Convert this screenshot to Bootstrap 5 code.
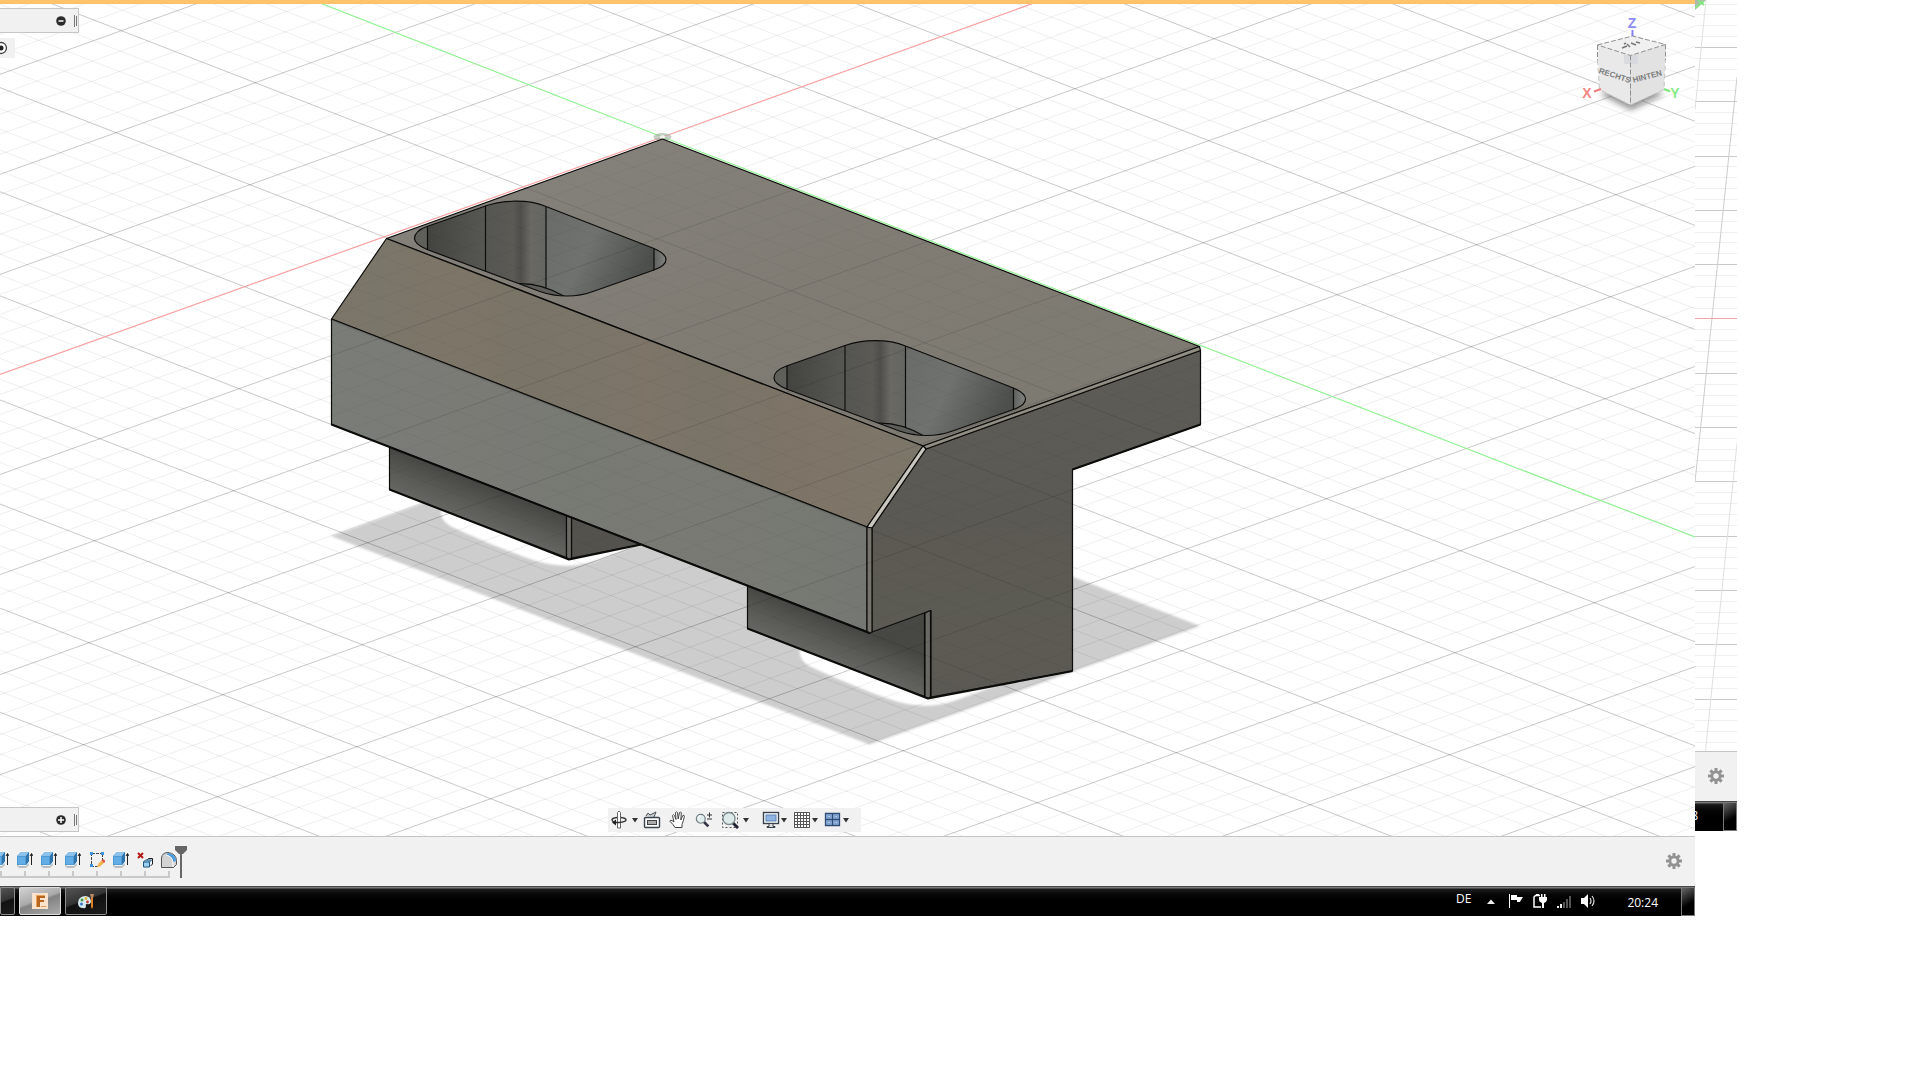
<!DOCTYPE html>
<html lang="de">
<head>
<meta charset="utf-8">
<meta name="viewport" content="width=device-width, initial-scale=1">
<title>CAD-Arbeitsbereich</title>
<link href="https://cdn.jsdelivr.net/npm/bootstrap@5.3.0/dist/css/bootstrap.min.css" rel="stylesheet">
<style>
body{background:#fff;font-family:"Open Sans","Noto Sans",sans-serif;font-size:12px;line-height:16px;overflow-x:hidden}
svg{display:block}
.btn{line-height:1;--bs-btn-border-radius:0}
.screen-main{flex:0 0 88.28125%;min-width:0}
.screen-rest{flex:0 0 2.1875%;min-width:0;overflow:hidden}
.topline{height:4px;background:#ffc46b}
.scene{width:100%;height:auto}
.palette{background:#f1f1f1;border:1px solid #c6c6c6;border-left:0;width:79px;height:25px;left:0}
.palette-top{top:4px}
.palette-bottom{bottom:4px}
.eye-row{left:0;top:34px;width:15px;height:20px;background:#f1f1f1}
.nav-tools{left:35.87%;bottom:4px;height:24px;padding:0 12px 0 2px;background:#f1f1f1}
.g5{gap:5px}.g6{gap:6px}.g8{gap:8px}.g4{gap:4px}.g1{gap:1px}.after-gap{margin-left:8px}
.timeline{height:50px;background:#f1f1f1;border-top:1px solid #c4c4c4}
.steps{margin-left:-11px;height:42px;padding-top:15px}
.steps li{width:24px;height:26px;position:relative}
.steps li::before{content:"";position:absolute;left:0;right:0;bottom:0;height:2px;background:#c9c9c9}
.steps li:last-child::before{right:11px}
.steps li::after{content:"";position:absolute;left:11px;bottom:0;width:2px;height:7px;background:#c9c9c9}
.playhead{margin:9px 0 0 -6px}
.gear{margin:16px 13px 0 0}
.taskbar{height:30px;color:#fff;background:linear-gradient(#1b1b1b 0,#777 1px,#777 2px,#1c1c1c 3px,#060606 9px,#000 15px)}
.task{width:42px;height:28px;border:1px solid #8e8e8e!important;border-radius:2px!important;background:linear-gradient(160deg,#555 0,#333 45%,#111 50%,#1c1c1c 100%)}
.task-cut{width:15px}
.task-on{border-color:#ddd!important;background:linear-gradient(160deg,#d2d2d2 0,#aaa 45%,#828282 52%,#aaa 100%)}
.tray{color:#fff}
.lang{margin-right:16px;margin-bottom:4px}
.tray-ico{gap:10px;margin-left:14px}
.clock{margin-left:32px;margin-right:23px}
.peek{width:14px;height:29px;border:1px solid #777!important;background:linear-gradient(150deg,#666 0,#222 40%,#000 60%)}
.clock-cut{width:3px;direction:rtl}
</style>
</head>
<body>
<svg width="0" height="0" class="position-absolute" aria-hidden="true">
<defs>
<symbol id="extrude" viewBox="0 0 16 16"><path d="M0 12l2 2h7l3-3v2l-3 3H2l-2-2z" fill="#b9bec6"/><path d="M0 4l4-4h8v9l-3 4H0z" fill="#4f9bd6"/><path d="M0 4l4-4h8L9 4z" fill="#8cc2ea"/><path d="M9 4l3-4v9l-3 4z" fill="#2f74ad"/><path d="M1 5h7v7H1z" fill="#63ade6"/><path d="M14.500 13V2M13 4l1.500-2.500L16 4" stroke="#222" fill="none"/></symbol>
<symbol id="sketch" viewBox="0 0 16 16"><path d="M2.500 1v12M14 1.500H2M13.500 2v6M2 14.500h7" stroke="#444" fill="none" stroke-dasharray="3 1"/><path d="M1 0h3v3H1zM12 0h3v3h-3zM1 12h3v3H1z" fill="#3a93dc"/><path d="M8 15l1.500-3.500L13 8l3 2-5 4.500z" fill="#f3b44c"/><path d="M12.500 8.500L14 7l2.500 2L15 11z" fill="#e0574c"/></symbol>
<symbol id="delbody" viewBox="0 0 16 16"><path d="M1 1l5 5M6 1L1 6" stroke="#b61717" stroke-width="2"/><path d="M9.500 9l2-2.500h4V12l-2 2" fill="#eef5fb" stroke="#1d1d1d"/><path d="M6.500 10h6v5h-6zM6.500 10l2-2h6l-2 2" fill="#9bd0f2" stroke="#20577d"/></symbol>
<symbol id="fillet" viewBox="0 0 16 16"><path d="M.5 15.500V6Q1 .5 7 .5q8 1 8.500 8v4l-3 3z" fill="#d3d3d3" stroke="#555"/><path d="M7 1q8 1 8 8l-3 1Q11 4 5 3z" fill="#4d9bdc"/><path d="M5 3q6 1 7 7v5" stroke="#fff" fill="none"/></symbol>
<symbol id="gear" viewBox="0 0 16 16"><g fill="#929292"><path d="M6.500 0h3v16h-3z"/><path d="M6.500 0h3v16h-3z" transform="rotate(45 8 8)"/><path d="M6.500 0h3v16h-3z" transform="rotate(90 8 8)"/><path d="M6.500 0h3v16h-3z" transform="rotate(135 8 8)"/><circle cx="8" cy="8" r="5.500"/></g><circle cx="8" cy="8" r="2.700" fill="#f1f1f1"/></symbol>
<symbol id="caret" viewBox="0 0 6 5"><path d="M0 0h6L3 4.500z" fill="#333"/></symbol>
<symbol id="lens" viewBox="0 0 18 18"><path d="M9 9l6 6" stroke="#334" stroke-width="3"/><circle cx="6.500" cy="6.500" r="5" fill="#dfeeed" stroke="#6f7b80" stroke-width="1.300"/><path d="M3.500 6q.5-3 3-3" stroke="#fff" fill="none" stroke-width="1.500"/></symbol>
<clipPath id="bodyclip"><path d="M386.500 238.500L662.500 139 1200 347V424L1073 469V671L928 698 748 628V587L640 544 569 559 389 489V447L331 424V319Z"/></clipPath>
<linearGradient id="gTop" x1="0" y1="0" x2="1" y2="1"><stop offset="0" stop-color="#86837c"/><stop offset=".5" stop-color="#807c74"/><stop offset="1" stop-color="#7c7970"/></linearGradient>
<linearGradient id="gCham" gradientUnits="userSpaceOnUse" x1="331" y1="0" x2="923" y2="0"><stop offset="0" stop-color="#7b7568"/><stop offset=".08" stop-color="#7a7669"/><stop offset=".2" stop-color="#7d7568"/><stop offset=".34" stop-color="#797467"/><stop offset=".44" stop-color="#7a7568"/><stop offset=".53" stop-color="#7e7468"/><stop offset=".63" stop-color="#797467"/><stop offset=".8" stop-color="#7e7367"/><stop offset=".86" stop-color="#7e7568"/><stop offset="1" stop-color="#7b7669"/></linearGradient>
<linearGradient id="gFront" gradientUnits="userSpaceOnUse" x1="331" y1="0" x2="870" y2="0"><stop offset="0" stop-color="#797c77"/><stop offset=".25" stop-color="#7b7b76"/><stop offset=".45" stop-color="#777973"/><stop offset=".65" stop-color="#797a73"/><stop offset="1" stop-color="#757872"/></linearGradient>
<linearGradient id="gSide" x1="0" y1="0" x2="0" y2="1"><stop offset="0" stop-color="#5d5c56"/><stop offset=".5" stop-color="#5b5953"/><stop offset=".72" stop-color="#5c5b53"/><stop offset="1" stop-color="#5b5953"/></linearGradient>
<linearGradient id="gFoot" gradientUnits="userSpaceOnUse" x1="480" y1="484" x2="464" y2="524"><stop offset="0" stop-color="#474744"/><stop offset=".5" stop-color="#5a5a56"/><stop offset="1" stop-color="#696b67"/></linearGradient>
<linearGradient id="gW1" x1="0" x2="1"><stop offset="0" stop-color="#434340"/><stop offset="1" stop-color="#575753"/></linearGradient>
<linearGradient id="gW2" x1="0" x2="1"><stop offset="0" stop-color="#555551"/><stop offset=".45" stop-color="#5b5a55"/><stop offset=".58" stop-color="#504e4a"/><stop offset=".75" stop-color="#6a6964"/><stop offset="1" stop-color="#646561"/></linearGradient>
<linearGradient id="gW3" x1="0" x2="1" y1="0" y2=".5"><stop offset="0" stop-color="#686b67"/><stop offset=".5" stop-color="#6f726e"/><stop offset="1" stop-color="#4d4f4c"/></linearGradient>
<linearGradient id="gW4" x1="0" x2="1"><stop offset="0" stop-color="#5f615e"/><stop offset="1" stop-color="#8b8c88"/></linearGradient>
<clipPath id="pclip"><path d="M414.500 238.500C414.500 233 420 229 427 226.500L485.500 206C503 200 528 199 546 206.500L654 248.500C662 252 666 255 666 259.500S661 267.500 654 270L593 291.500C577 297.500 557 297.500 540 291.500L427 249.500C419 246 414.500 243 414.500 238.500Z"/></clipPath>
<filter id="soft" x="-5%" y="-5%" width="110%" height="110%"><feGaussianBlur stdDeviation="1.3"/></filter>
<filter id="soft2" x="-50%" y="-50%" width="200%" height="200%"><feGaussianBlur stdDeviation="3"/></filter>
</defs>
</svg>

<div class="d-flex align-items-start">
<main class="screen-main">
  <div class="topline"></div>
  <section class="position-relative overflow-hidden" aria-label="Ansicht">
    <svg class="scene" viewBox="0 4 1695 832" role="img" aria-label="3D-Modell">
      <path d="M331 536L662 417.500 1200 626 869.500 744.500Z" fill="#cdcdcd" filter="url(#soft)"/>
      <g id="hole" fill="#fff" filter="url(#soft)"><path d="M446 500C438 510 439 520 452 527 480 540 510 552 530 559 552 567 575 568 595 561L642 544 560 500Z"/></g>
      <use href="#hole" x="359" y="140"/>
      <g id="grid" fill="none" stroke="#000"><path id="minor" stroke-opacity=".065"/><path id="major" stroke-opacity=".22"/></g>
      <path d="M0 374.500L662.500 137 1034 3" stroke="#f7a0a0" stroke-width="1.200" fill="none"/>
      <path d="M320 3L662.500 137 1695 537" stroke="#93f293" stroke-width="1.200" fill="none"/>
      <ellipse cx="662.500" cy="137" rx="9" ry="4" fill="#9fae9c" fill-opacity=".6"/><path d="M659 137l3.500-2 3.500 2-3.500 2z" fill="#f4f4ee"/>
      <g stroke="#0c0c0b" stroke-width="1.200" stroke-linejoin="round">
        <path id="foot1" d="M389.500 440V489.500L566.500 557.500V465Z" fill="url(#gFoot)"/>
        <path d="M571.500 500V558L641 544.500Z" fill="#53524d"/>
        <path d="M566.500 505V557.500L569 559.500 571.500 558V505Z" fill="#6a6964"/>
        <path d="M389.500 489.500L569 559.500 641 544.500" fill="none" stroke-width="2"/>
        <use href="#foot1" x="358" y="139"/>
        <path d="M386.500 238.500L662.500 139 1199.500 346.500 923 446Z" fill="url(#gTop)"/>
        <path d="M386.500 238.500L923 446 867 527 331.500 319Z" fill="url(#gCham)"/>
        <path d="M331.500 319L867 527V631.500L331.500 424.500Z" fill="url(#gFront)"/>
        <path d="M926 449L1200.500 350.500V424.500L1072.500 469.500V671L931 697V610.500L872 632V528Z" fill="url(#gSide)"/>
        <path d="M923 446L1199.500 346.500 1200.500 350.500 926 449Z" fill="#918e84"/>
        <path d="M923 446L926 449 872 528 867 527Z" fill="#c9c7be"/>
        <path d="M867 527L872 528V632L869.500 633.500 867 631.500Z" fill="#77746c"/>
        <path d="M925 613L930.500 610.500V697L928 698.500 925 697Z" fill="#6a6963"/>
        <path d="M331.500 424.500L869.500 633M747.500 628.500L928 698.500 1072.500 671M1072.500 469.500L1200.500 424.500" fill="none" stroke-width="2"/>
      </g>
      <g id="pocket">
        <g clip-path="url(#pclip)">
          <path d="M410 195h17v110h-17z" fill="#60605b"/>
          <path d="M427 195h59v110h-59z" fill="url(#gW1)"/>
          <path d="M486 195h60v110h-60z" fill="url(#gW2)"/>
          <path d="M546 195h108v110H546z" fill="url(#gW3)"/>
          <path d="M654 195h15v110h-15z" fill="url(#gW4)"/>
          <path d="M512 284Q540 281 567 298L530 295Z" fill="#5d5e59" stroke="#0c0c0b" stroke-width="1.300"/>
          <path d="M427.500 200v60M485.500 200v90M546 200v88M654 240v40" stroke="#0c0c0b" stroke-width="1.200"/>
        </g>
        <path d="M414.500 238.500C414.500 233 420 229 427 226.500L485.500 206C503 200 528 199 546 206.500L654 248.500C662 252 666 255 666 259.500S661 267.500 654 270L593 291.500C577 297.500 557 297.500 540 291.500L427 249.500C419 246 414.500 243 414.500 238.500Z" fill="none" stroke="#0c0c0b" stroke-width="1.200"/>
      </g>
      <use href="#pocket" x="359.500" y="139.500"/>
      <g clip-path="url(#bodyclip)"><use href="#grid" opacity=".5"/></g>
      <g>
        <path d="M1600 94L1631 80 1664 94 1631 110Z" fill="#666" opacity=".7" filter="url(#soft2)"/>
        <path d="M1597.500 45L1632.500 36 1665.500 44.500 1630.500 55.500Z" fill="#f0f0f0"/>
        <path d="M1597.500 45L1630.500 55.500V105L1599.500 89.500Z" fill="#e9e9ea"/>
        <path d="M1665.500 44.500L1630.500 55.500V105L1664 89.500Z" fill="#e2e2e3"/>
        <path d="M1624 55h14v9h-14z" fill="#d4d7dc" opacity=".8"/>
        <path d="M1597.500 45L1632.500 36 1665.500 44.500 1630.500 55.500ZV60M1665.500 44.500V60M1630.500 55.500V105" fill="none" stroke="#909090" stroke-dasharray="5 2"/>
        <path d="M1597.500 60L1599.500 89.500 1630.500 105 1664 89.500 1665.500 60" fill="none" stroke="#c4c4c4" stroke-dasharray="5 3"/>
        <path d="M1622 48l5-2m0-2l3 3m1-4l5 2m0-3l4 1m-16 1l2-1" stroke="#777" stroke-width="1.500"/>
        <path d="M1632.500 30v6" stroke="#8585ee" stroke-width="2"/><path d="M1594 91.500l7-2.500" stroke="#f07c7c" stroke-width="2"/><path d="M1664 89l6 2.500" stroke="#7ce67c" stroke-width="2"/>
        <g font-family="Liberation Sans, sans-serif" font-weight="700" font-size="8" fill="#7c7c7c" text-anchor="middle">
          <text x="1614" y="78" transform="rotate(18 1614 78)">RECHTS</text>
          <text x="1648" y="79" transform="rotate(-15 1648 79)">HINTEN</text>
        </g>
        <g font-family="Liberation Sans, sans-serif" font-size="14" font-weight="700" text-anchor="middle"><text x="1632" y="28" fill="#8c8cf2">Z</text><text x="1587" y="98" fill="#f58585">X</text><text x="1675" y="98" fill="#85ec85">Y</text></g>
      </g>
    </svg>
    <div class="palette palette-top position-absolute d-flex align-items-center justify-content-end g8">
      <button class="btn p-0 border-0" aria-label="Reduzieren"><svg width="10" height="10"><circle cx="5" cy="5" r="4.800" fill="#2b2b2b"/><path d="M2.500 5h5" stroke="#fff" stroke-width="1.500"/></svg></button>
      <svg width="4" height="12"><path d="M.5 0v12M2.500 1v10" stroke="#777"/></svg>
    </div>
    <div class="eye-row position-absolute overflow-hidden"><svg width="15" height="20"><circle cx="1" cy="10" r="5.500" fill="#fff" stroke="#444" stroke-width="1.300"/><circle cx="1" cy="10" r="2.500" fill="#222"/></svg></div>
    <div class="palette palette-bottom position-absolute d-flex align-items-center justify-content-end g8">
      <button class="btn p-0 border-0" aria-label="Erweitern"><svg width="10" height="10"><circle cx="5" cy="5" r="4.800" fill="#2b2b2b"/><path d="M2 5h6M5 2v6" stroke="#fff" stroke-width="1.500"/></svg></button>
      <svg width="4" height="12"><path d="M.5 0v12M2.500 1v10" stroke="#777"/></svg>
    </div>
    <div class="nav-tools position-absolute d-flex align-items-center g5" role="toolbar" aria-label="Navigation">
      <button class="btn p-0 border-0 d-flex align-items-center g4" aria-label="Orbit"><svg width="18" height="18"><path d="M7.500 1.500L9 0l1.500 1.500V17h-3z" fill="#fff" stroke="#555" stroke-width=".9"/><path d="M11 6.500q5 .5 5 2.500t-7 2.500H4M7 6.500Q2 7 2 9q0 1 2 2" fill="none" stroke="#333" stroke-width="1.400"/><path d="M6 8.500v6l-4-3z" fill="#222"/></svg><svg width="6" height="5"><use href="#caret"/></svg></button>
      <div class="d-flex align-items-center g8">
        <button class="btn p-0 border-0" aria-label="Ausrichten"><svg width="18" height="18"><path d="M3 5l2-3 2 2 6-3-2 5" fill="#ccc" stroke="#4a5158"/><rect x="1.500" y="6.500" width="15" height="10" rx="1" fill="#fff" stroke="#3b434b" stroke-width="1.400"/><rect x="4.500" y="9.500" width="9" height="4" fill="#aaa" stroke="#444"/></svg></button>
        <button class="btn p-0 border-0" aria-label="Pan"><svg width="18" height="18"><path d="M6 16.500Q4 13 1 10.500q0-2 2-1l2 1.500-1.500-6.500q.8-1.800 2 0l1.500 4-.5-7q1-1.500 2 0l.7 6.500 1.300-6.500q1.300-1.200 1.800.3L11.800 9l2-4.500q1.500-.8 1.600.8-1 5-2.400 8v3.200z" fill="#fff" stroke="#444"/></svg></button>
        <button class="btn p-0 border-0" aria-label="Zoom"><svg width="18" height="18"><use href="#lens" y="2" width="16" height="16"/><path d="M12 4h5M14.500 1.500v5M12 8h5" stroke="#333"/></svg></button>
        <button class="btn p-0 border-0 d-flex align-items-center g4" aria-label="Einpassen"><svg width="18" height="18"><rect x="1.500" y="1.500" width="15" height="15" fill="none" stroke="#555" stroke-dasharray="2 2"/><path d="M12 12l5 5" stroke="#223" stroke-width="3"/><circle cx="8" cy="7.500" r="6" fill="#dcebea" stroke="#7c8a8d" stroke-width="1.300"/></svg><svg width="6" height="5"><use href="#caret"/></svg></button>
      </div>
      <div class="d-flex align-items-center g6 after-gap">
        <button class="btn p-0 border-0 d-flex align-items-center g1" aria-label="Anzeige"><svg width="18" height="18"><rect x="1.500" y="1.500" width="15" height="11" fill="#fff" stroke="#39434e" stroke-width="1.400"/><rect x="4" y="4" width="10" height="6" fill="#8eb4e3" stroke="#5b82b4"/><path d="M7 13v2.500H5v1h8v-1h-2V13" fill="#ddd" stroke="#39434e"/></svg><svg width="6" height="5"><use href="#caret"/></svg></button>
        <button class="btn p-0 border-0 d-flex align-items-center g1" aria-label="Raster"><svg width="18" height="18"><path d="M1.500 1.500h15v15h-15zM4.500 1v15M7.500 1v15M10.500 1v15M13.500 1v15M1 4.500h15M1 7.500h15M1 10.500h15M1 13.500h15" fill="#fff" stroke="#555"/></svg><svg width="6" height="5"><use href="#caret"/></svg></button>
        <button class="btn p-0 border-0 d-flex align-items-center g1" aria-label="Ansichtsfenster"><svg width="18" height="18"><path d="M1.500 2.500h7v6h-7zM8.500 2.500h7v6h-7zM1.500 8.500h7v6h-7zM8.500 8.500h7v6h-7z" fill="#8fb2de" stroke="#2f4c76" stroke-width="1.300"/><path d="M4 4.500h2.500v2H4zM11 4.500h2.500v2H11zM4 10.500h2.500v2H4zM11 10.500h2.500v2H11z" fill="#bcd3ef" stroke="#6288bb" stroke-width=".6"/></svg><svg width="6" height="5"><use href="#caret"/></svg></button>
      </div>
    </div>
  </section>
  <section class="timeline d-flex align-items-start overflow-hidden" aria-label="Zeitachse">
    <ul class="steps list-unstyled d-flex mb-0">
      <li class="d-flex justify-content-center align-items-start"><button class="btn p-0 border-0" aria-label="Extrusion 1"><svg width="16" height="16"><use href="#extrude"/></svg></button></li>
      <li class="d-flex justify-content-center align-items-start"><button class="btn p-0 border-0" aria-label="Extrusion 2"><svg width="16" height="16"><use href="#extrude"/></svg></button></li>
      <li class="d-flex justify-content-center align-items-start"><button class="btn p-0 border-0" aria-label="Extrusion 3"><svg width="16" height="16"><use href="#extrude"/></svg></button></li>
      <li class="d-flex justify-content-center align-items-start"><button class="btn p-0 border-0" aria-label="Extrusion 4"><svg width="16" height="16"><use href="#extrude"/></svg></button></li>
      <li class="d-flex justify-content-center align-items-start"><button class="btn p-0 border-0" aria-label="Skizze"><svg width="16" height="16"><use href="#sketch"/></svg></button></li>
      <li class="d-flex justify-content-center align-items-start"><button class="btn p-0 border-0" aria-label="Extrusion 5"><svg width="16" height="16"><use href="#extrude"/></svg></button></li>
      <li class="d-flex justify-content-center align-items-start"><button class="btn p-0 border-0" aria-label="Löschen"><svg width="16" height="16"><use href="#delbody"/></svg></button></li>
      <li class="d-flex justify-content-center align-items-start"><button class="btn p-0 border-0" aria-label="Abrundung"><svg width="16" height="16"><use href="#fillet"/></svg></button></li>
    </ul>
    <svg class="playhead" width="12" height="32"><path d="M0 0h12v4L8 8H7v24H5V8H4L0 4z" fill="#666"/></svg>
    <button class="btn p-0 border-0 ms-auto gear" aria-label="Einstellungen"><svg width="16" height="16"><use href="#gear"/></svg></button>
  </section>
  <footer class="taskbar d-flex align-items-center overflow-hidden">
    <div class="d-flex g4">
      <button class="btn p-0 task task-cut border-start-0" aria-label="Programm"></button>
      <button class="btn p-0 task task-on d-flex align-items-center justify-content-center" aria-label="Fusion"><svg width="16" height="16"><path d="M0 0h16v16H0z" fill="#fbe3cd"/><path d="M4 2h9v3H8v2h4v2H8v5H4z" fill="#b9651d"/><path d="M4 2h9v1H5v11H4z" fill="#e8a35b"/><path d="M9 13h5v1H9z" fill="#e09a5a"/></svg></button>
      <button class="btn p-0 task d-flex align-items-center justify-content-center" aria-label="Malprogramm"><svg width="16" height="16"><path d="M0 10Q0 4 7 3q6 0 6 6-1 3-4 2-2 0-1 2 0 3-3 2-5 0-5-5z" fill="#d8eaf2"/><circle cx="4" cy="7" r="1.500" fill="#4e9d3f"/><circle cx="8" cy="5.500" r="1.400" fill="#e3b52c"/><circle cx="3.500" cy="11" r="1.500" fill="#3875c4"/><circle cx="9.500" cy="9" r="1.400" fill="#c33b2c"/><path d="M12 1h4l-1 4h-2z" fill="#b98a62"/><path d="M13 5h2v9l-1 2-1-2z" fill="#e07f22"/></svg></button>
    </div>
    <div class="tray d-flex align-items-center ms-auto">
      <span class="lang">DE</span>
      <button class="btn p-0 border-0" aria-label="Ausgeblendete Symbole"><svg width="8" height="5"><path d="M0 5l4-4.500L8 5z" fill="#eee"/></svg></button>
      <div class="tray-ico d-flex align-items-center">
        <svg width="14" height="14"><path d="M.5 0v14" stroke="#fff"/><path d="M2 1h6v2l6 0-2 3-1 2H8V6H2z" fill="#fff"/></svg>
        <svg width="14" height="14"><path d="M7 1.500H2.500L1 3v10h7" stroke="#fff" fill="none" stroke-width="1.500"/><path d="M3 0h3v1H3zM8 0h1.500v3H8zM11 0h1.500v3H11zM6 3h8v3q-1 3-3 3v5H9V9Q6 8 6 6z" fill="#fff"/></svg>
        <svg width="14" height="14"><path d="M0 12h2v2H0zM3 10h2v4H3z" fill="#eee"/><path d="M6 8h2v6H6zM9 5h2v9H9zM12 2h2v12h-2z" fill="#555"/></svg>
        <svg width="14" height="14"><path d="M0 4h3l4-4v14l-4-4H0z" fill="#fff"/><path d="M9 4q2 3 0 6M11 2q4 5 0 10" stroke="#ddd" fill="none" stroke-width="1.200"/></svg>
      </div>
      <time class="clock mt-1">20:24</time>
      <button class="btn p-0 peek" aria-label="Desktop anzeigen"></button>
    </div>
  </footer>
</main>

<aside class="screen-rest">
  <svg class="scene" viewBox="1695 0 42 751" aria-hidden="true">
    <path id="restMinor" stroke="#efefef" fill="none"/>
    <path id="restMajor" stroke="#c9c9c9" fill="none"/>
    <path d="M1737 77L1695 482" stroke="#ccc"/>
    <path d="M1706 0L1695 110M1737 443L1705.500 751" stroke="#e0e0e0"/>
    <path d="M1695 318.500h42" stroke="#eba9a9"/>
    <path d="M1695 0h11l-11 10z" fill="#b0b8ae"/><path d="M1695 8l9-7m-6-1l6 5" stroke="#84e684" stroke-width="2"/>
  </svg>
  <div class="timeline d-flex align-items-start justify-content-center"><button class="btn p-0 border-0 mt-3" aria-label="Einstellungen"><svg width="16" height="16"><use href="#gear"/></svg></button></div>
  <div class="taskbar d-flex align-items-center overflow-hidden"><span class="clock-cut overflow-hidden">8</span><button class="btn p-0 peek ms-auto" aria-label="Desktop anzeigen"></button></div>
</aside>
</div>
<script src="https://cdn.jsdelivr.net/npm/bootstrap@5.3.0/dist/js/bootstrap.bundle.min.js"></script>
<script>
// Ground plane: one main cell spans u and v, each cell has five subdivisions.
const o=[662.4,136.7],u=[139.3,-50],v=[133.9,52];
let minor='',major='';
const line=(a,b,n)=>{const x=o[0]+a[0]*n/5,y=o[1]+a[1]*n/5;return `M${(x-b[0]*14).toFixed(1)} ${(y-b[1]*14).toFixed(1)}L${(x+b[0]*14).toFixed(1)} ${(y+b[1]*14).toFixed(1)}`};
for(let n=-70;n<=70;n++){
  if(n===0)continue;
  const s=line(u,v,n)+line(v,u,n);
  if(n%5)minor+=s;else major+=s;
}
document.getElementById('minor').setAttribute('d',minor);
document.getElementById('major').setAttribute('d',major);
let rm='',rM='';
for(let n=-4;n<65;n++){const s=`M1695 ${Math.round(47+n*10.86)+.5}h42`;if(n%5)rm+=s;else if(n!==25)rM+=s;}
document.getElementById('restMinor').setAttribute('d',rm);
document.getElementById('restMajor').setAttribute('d',rM);
</script>
</body>
</html>
